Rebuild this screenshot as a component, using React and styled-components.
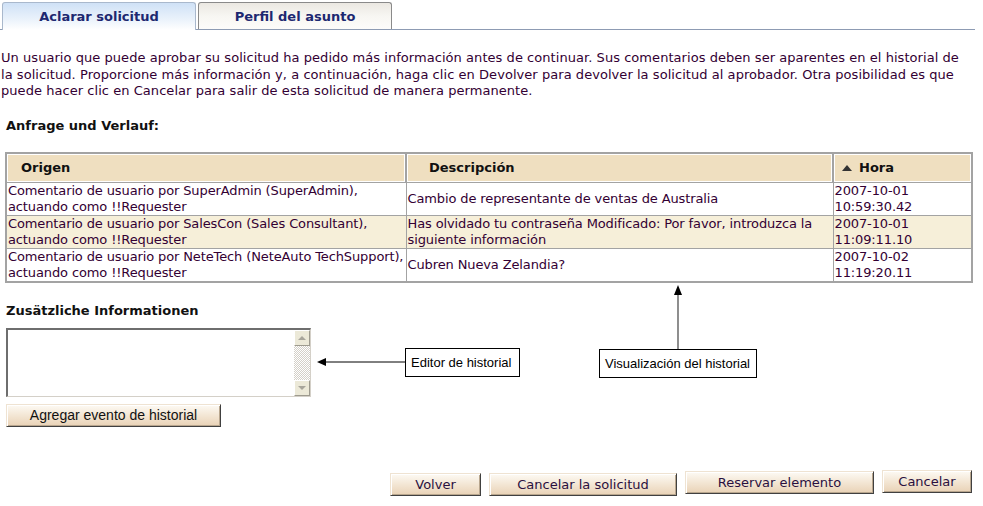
import React from 'react'
import styled, { createGlobalStyle } from 'styled-components'

const GlobalStyle = createGlobalStyle`
  body {
    margin: 0;
    background: #fff;
    font-family: "DejaVu Sans", Verdana, sans-serif;
    font-size: 13px;
    color: #330033;
  }
`

const Page = styled.div`
  width: 983px;
  height: 506px;
  position: relative;
  overflow: hidden;
`

const TabBar = styled.div`
  display: flex;
  gap: 2px;
  padding: 2px 0 0 2px;
  width: 973px;
  border-bottom: 1px solid #8d9bb3;
`

const Tab = styled.div`
  width: 194px;
  box-sizing: border-box;
  display: flex;
  align-items: center;
  justify-content: center;
  font-weight: bold;
  font-size: 13px;
  color: #1d2870;
  border: 1px solid ${p => (p.$active ? '#a9b8cc' : '#8a8a8a')};
  border-bottom: none;
  border-radius: 3px 3px 0 0;
  background: ${p =>
    p.$active
      ? 'linear-gradient(#cfe1f6, #eaf2fb 60%, #ffffff)'
      : 'linear-gradient(#ebe8e2, #f7f6f2 50%, #fdfcfa)'};
  margin-bottom: ${p => (p.$active ? '-1px' : '0')};
  height: ${p => (p.$active ? '28px' : '27px')};
`

const Intro = styled.p`
  margin: 20px 0 0 1px;
  width: 962px;
  line-height: 16.5px;
  letter-spacing: 0.05px;
`

const Heading = styled.div`
  font-weight: bold;
  color: #111;
  margin: ${p => p.$mt}px 0 0 6px;
  line-height: 16px;
`

const Table = styled.table`
  margin: 18px 0 0 5px;
  width: 966px;
  border-collapse: collapse;
  border: 2px solid #a3a3a3;
  table-layout: fixed;
`

const Th = styled.th`
  background: #efdfc0;
  height: 28px;
  text-align: left;
  padding: 0 0 0 ${p => p.$pl || 14}px;
  font-weight: bold;
  color: #111;
  border: 1px solid #a3a3a3;
  border-right: 2px solid #a3a3a3;
  box-shadow: inset 0 0 0 1px #fff;
`

const Tr = styled.tr`
  background: ${p => (p.$alt ? '#f6efd9' : '#fff')};
`

const Td = styled.td`
  height: 32px;
  padding: 0 0 0 1px;
  border: 1px solid #a3a3a3;
  line-height: 16px;
  vertical-align: middle;
  letter-spacing: -0.12px;
`

const SortArrow = styled.span`
  display: inline-block;
  width: 0;
  height: 0;
  border-left: 5px solid transparent;
  border-right: 5px solid transparent;
  border-bottom: 6px solid #333;
  margin-right: 7px;
  vertical-align: 1px;
`

const EditorRow = styled.div`
  display: flex;
  align-items: center;
  margin: 9px 0 0 6px;
`

const FakeArea = styled.div`
  width: 305px;
  height: 69px;
  box-sizing: border-box;
  display: flex;
  border-top: 2px solid #6e6e6e;
  border-left: 2px solid #6e6e6e;
  border-right: 1px solid #d4d0c8;
  border-bottom: 1px solid #d4d0c8;
  background: #fff;
`

const Area = styled.textarea`
  flex: 1;
  border: none;
  resize: none;
  outline: none;
  padding: 2px;
  font-family: inherit;
`

const ScrollBar = styled.div`
  width: 16px;
  display: flex;
  flex-direction: column;
  justify-content: space-between;
  background-color: #f2f1ec;
  background-image: repeating-conic-gradient(#d4d0c8 0 25%, #fff 0 50%);
  background-size: 2px 2px;
`

const ScrollBtn = styled.div`
  height: 16px;
  box-sizing: border-box;
  background: #ece9d8;
  border: 1px solid;
  border-color: #fff #9e9b8f #9e9b8f #fff;
  display: flex;
  align-items: center;
  justify-content: center;
  &::after {
    content: '';
    border-left: 4px solid transparent;
    border-right: 4px solid transparent;
    ${p =>
      p.$down ? 'border-top: 4px solid #a8a59b;' : 'border-bottom: 4px solid #a8a59b;'}
  }
`

const Callout = styled.div`
  border: 1px solid #000;
  background: #fff;
  font-family: "Liberation Sans", Arial, sans-serif;
  font-size: 13px;
  color: #000;
  height: 29px;
  width: ${p => p.$w}px;
  box-sizing: border-box;
  padding: 0 5px;
  display: flex;
  align-items: center;
`

const EditorNote = styled.div`
  display: flex;
  align-items: center;
  margin-left: 6px;
`

const ViewNote = styled.div`
  position: absolute;
  left: 599px;
  top: 285px;
  display: flex;
  flex-direction: column;
  align-items: center;
`

const Button = styled.button`
  height: 23px;
  box-sizing: border-box;
  width: ${p => p.$w}px;
  margin-top: ${p => p.$mt || 0}px;
  font-family: ${p =>
    p.$arial ? '"Liberation Sans", Arial, sans-serif' : '"DejaVu Sans", Verdana, sans-serif'};
  font-size: ${p => (p.$arial ? 14 : 13)}px;
  color: ${p => (p.$arial ? '#111' : '#2a1040')};
  padding: 0;
  background: linear-gradient(#fdfaf4, #f3e6d4 50%, #e9d2b6);
  border: 1px solid;
  border-color: #efe3d2 #404040 #404040 #efe3d2;
  box-shadow: inset 1px 1px 0 #fff, inset -1px -1px 0 #b8a68e;
`

const AddButton = styled(Button)`
  margin: 7px 0 0 6px;
  display: block;
`

const Actions = styled.div`
  display: flex;
  justify-content: flex-end;
  align-items: flex-start;
  gap: 8px;
  padding-right: 11px;
  margin-top: 43px;
`

const rows = [
  {
    origin: 'Comentario de usuario por SuperAdmin (SuperAdmin), actuando como !!Requester',
    desc: 'Cambio de representante de ventas de Australia',
    time: ['2007-10-01', '10:59:30.42'],
  },
  {
    origin: 'Comentario de usuario por SalesCon (Sales Consultant), actuando como !!Requester',
    desc: 'Has olvidado tu contraseña Modificado: Por favor, introduzca la siguiente información',
    time: ['2007-10-01', '11:09:11.10'],
  },
  {
    origin: 'Comentario de usuario por NeteTech (NeteAuto TechSupport), actuando como !!Requester',
    desc: 'Cubren Nueva Zelandia?',
    time: ['2007-10-02', '11:19:20.11'],
  },
]

export default function App() {
  return (
    <Page>
      <GlobalStyle />
      <TabBar>
        <Tab $active>Aclarar solicitud</Tab>
        <Tab>Perfil del asunto</Tab>
      </TabBar>

      <Intro>
        Un usuario que puede aprobar su solicitud ha pedido más información antes de continuar. Sus
        comentarios deben ser aparentes en el historial de la solicitud. Proporcione más información y, a
        continuación, haga clic en Devolver para devolver la solicitud al aprobador. Otra posibilidad es que
        puede hacer clic en Cancelar para salir de esta solicitud de manera permanente.
      </Intro>

      <Heading $mt={18}>Anfrage und Verlauf:</Heading>

      <Table>
        <colgroup>
          <col style={{ width: 400 }} />
          <col style={{ width: 427 }} />
          <col style={{ width: 139 }} />
        </colgroup>
        <thead>
          <tr>
            <Th>Origen</Th>
            <Th $pl={22}>Descripción</Th>
            <Th $pl={8}>
              <SortArrow />
              Hora
            </Th>
          </tr>
        </thead>
        <tbody>
          {rows.map((r, i) => (
            <Tr key={i} $alt={i === 1}>
              <Td>{r.origin}</Td>
              <Td>{r.desc}</Td>
              <Td>
                {r.time[0]}
                <br />
                {r.time[1]}
              </Td>
            </Tr>
          ))}
        </tbody>
      </Table>

      <Heading $mt={20}>Zusätzliche Informationen</Heading>

      <EditorRow>
        <FakeArea>
          <Area />
          <ScrollBar>
            <ScrollBtn />
            <ScrollBtn $down />
          </ScrollBar>
        </FakeArea>
        <EditorNote>
          <svg width="88" height="10" viewBox="0 0 88 10">
            <line x1="6" y1="5" x2="88" y2="5" stroke="#000" strokeWidth="1" />
            <polygon points="0,5 9,1 9,9" fill="#000" />
          </svg>
          <Callout $w={115}>Editor de historial</Callout>
        </EditorNote>
      </EditorRow>

      <ViewNote>
        <svg width="10" height="64" viewBox="0 0 10 64">
          <line x1="5" y1="6" x2="5" y2="64" stroke="#444" strokeWidth="1.2" />
          <polygon points="5,0 1,10 9,10" fill="#000" />
        </svg>
        <Callout $w={158}>Visualización del historial</Callout>
      </ViewNote>

      <AddButton $arial $w={215}>Agregar evento de historial</AddButton>

      <Actions>
        <Button $w={91} $mt={3}>Volver</Button>
        <Button $w={188} $mt={3}>Cancelar la solicitud</Button>
        <Button $w={189} $mt={1}>Reservar elemento</Button>
        <Button $w={90}>Cancelar</Button>
      </Actions>
    </Page>
  )
}
